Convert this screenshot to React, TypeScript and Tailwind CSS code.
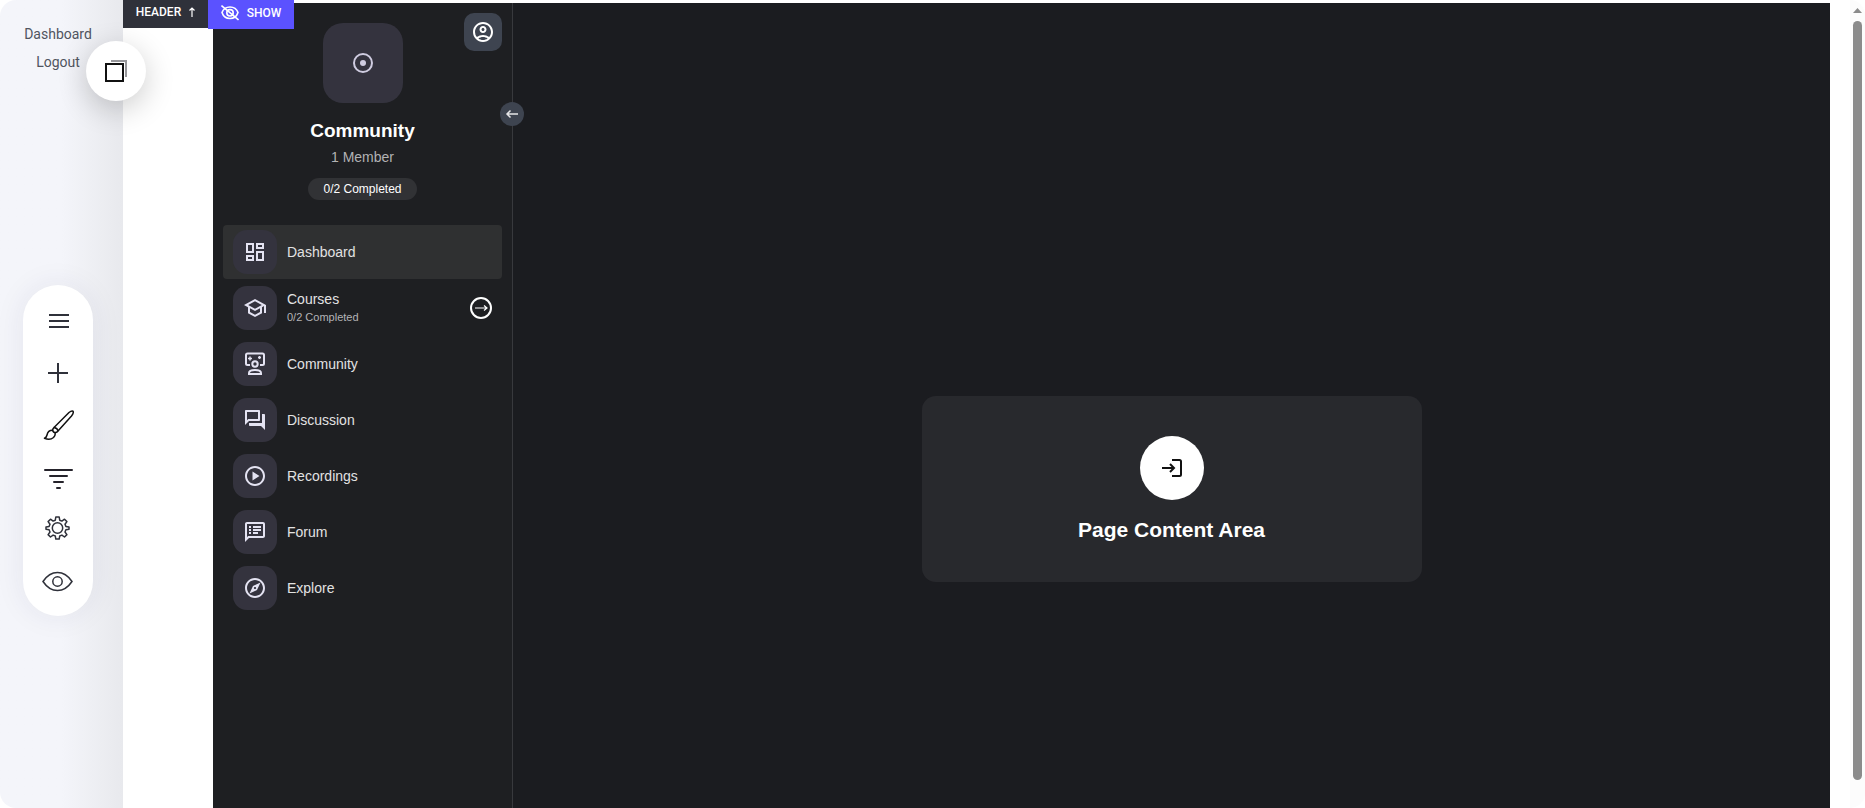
import { ReactNode } from "react";
import {
  MdOutlineAccountCircle,
  MdOutlineDashboard,
  MdOutlineExplore,
  MdOutlineForum,
  MdOutlinePlayCircle,
  MdOutlineSchool,
  MdOutlineSpeakerNotes,
} from "react-icons/md";

type NavItem = {
  label: string;
  icon: ReactNode;
  note?: string;
  active?: boolean;
};

function CommunityIcon() {
  return (
    <svg width="24" height="24" viewBox="0 0 24 24" fill="none" stroke="currentColor" strokeWidth="2" aria-hidden="true">
      <path d="M7 13H4.500Q3 13 3 11.500V3Q3 1.500 4.500 1.500H19.500Q21 1.500 21 3V11.500Q21 13 19.500 13H17" />
      <circle cx="12" cy="12" r="2.700" />
      <path d="M6 22V21Q6 18 12 18T18 21V22Z" />
      <path d="M7 4.500v4M5 6.500h4M16.500 4v3M15 5.500h3" strokeWidth="1.500" />
    </svg>
  );
}

const navItems: NavItem[] = [
  { label: "Dashboard", icon: <MdOutlineDashboard size={24} />, active: true },
  { label: "Courses", icon: <MdOutlineSchool size={24} />, note: "0/2 Completed" },
  { label: "Community", icon: <CommunityIcon /> },
  { label: "Discussion", icon: <MdOutlineForum size={24} /> },
  { label: "Recordings", icon: <MdOutlinePlayCircle size={24} /> },
  { label: "Forum", icon: <MdOutlineSpeakerNotes size={24} /> },
  { label: "Explore", icon: <MdOutlineExplore size={24} /> },
];

const tools: { label: string; icon: ReactNode }[] = [
  {
    label: "Menu",
    icon: (
      <svg width="32" height="32" viewBox="0 0 32 32" stroke="#2f313a" strokeWidth="2" aria-hidden="true">
        <path d="M7 10h20M7 16h20M7 22h20" />
      </svg>
    ),
  },
  {
    label: "Add",
    icon: (
      <svg width="32" height="32" viewBox="0 0 32 32" stroke="#2f313a" strokeWidth="2" aria-hidden="true">
        <path d="M6 16h20M16 6v20" />
      </svg>
    ),
  },
  {
    label: "Styles",
    icon: (
      <svg width="32" height="32" viewBox="0 0 32 32" fill="none" stroke="#111" strokeWidth="1.500" strokeLinejoin="round" aria-hidden="true">
        <path d="M12 18.500 27 3.500Q29.500 1.500 31 2.200Q32 4 29.500 7L16 22" />
        <path d="M12 18.500Q9.500 21 11.500 23Q14 24.500 16 22Q15.500 19 12 18.500Z" />
        <path d="M10.800 21.200Q6 21 5 26Q4.500 28.500 2.500 29.300Q8 31.500 11.500 28.500Q13.800 26 13 23.800" />
      </svg>
    ),
  },
  {
    label: "Filter",
    icon: (
      <svg width="32" height="32" viewBox="0 0 32 32" stroke="#25232b" strokeWidth="2" strokeLinecap="round" aria-hidden="true">
        <path d="M3 9h27M8 15h17M12 21h9M15 27h3" />
      </svg>
    ),
  },
  {
    label: "Settings",
    icon: (
      <svg width="32" height="32" viewBox="0 0 32 32" fill="none" stroke="#2f313a" strokeWidth="1.500" strokeLinejoin="round" aria-hidden="true">
        <circle cx="15.500" cy="15" r="5.200" />
        <path d="M13.800 4h3.400l.5 3.200 2.200.9 2.600-1.900 2.400 2.400-1.900 2.600.9 2.200 3.100.5v2.400l-3.100.5-.9 2.200 1.900 2.600-2.400 2.400-2.600-1.900-2.200.9-.5 3.100h-3.400l-.5-3.100-2.200-.9-2.600 1.900-2.400-2.400 1.900-2.600-.9-2.200-3.100-.5v-2.400l3.100-.5.9-2.200-1.900-2.600 2.400-2.400 2.600 1.900 2.200-.9z" />
      </svg>
    ),
  },
  {
    label: "Preview",
    icon: (
      <svg width="32" height="32" viewBox="0 0 32 32" fill="none" stroke="#2f313a" strokeWidth="1.500" aria-hidden="true">
        <path d="M1 16.500Q7 7.500 15.500 7.500T30 16.500Q24 25.500 15.500 25.500T1 16.500Z" />
        <circle cx="15.500" cy="16.500" r="4.700" />
      </svg>
    ),
  },
];

function EditorRail() {
  return (
    <aside className="relative z-10 flex w-[123px] shrink-0 flex-col rounded-l-2xl bg-linear-to-r from-[#f4f5fa] from-50% to-[#e8e9ed] pt-5">
      <nav className="flex w-[116px] flex-col items-center font-[Roboto,sans-serif] text-sm leading-7 text-[#50545f]">
        <a href="#dashboard">Dashboard</a>
        <a href="#logout">Logout</a>
      </nav>
      <button
        aria-label="Duplicate"
        className="absolute top-[41px] left-[86px] flex size-[60px] items-center justify-center rounded-full bg-white shadow-[0_8px_30px_rgba(0,0,0,0.2)]"
      >
        <svg width="24" height="24" viewBox="0 0 24 24" fill="none" strokeWidth="2" aria-hidden="true">
          <path d="M7 2h15v16" stroke="#97979b" />
          <path d="M2 5h17v17H2z" stroke="#111" />
        </svg>
      </button>
      <div className="mt-[209px] ml-[23px] flex w-[70px] flex-col items-center gap-5 rounded-full bg-white pt-5 pb-[19px] shadow-[0_0_30px_rgba(40,40,90,0.08)]">
        {tools.map((tool) => (
          <button key={tool.label} aria-label={tool.label} className="size-8">
            {tool.icon}
          </button>
        ))}
      </div>
    </aside>
  );
}

function SectionTabs() {
  return (
    <div className="absolute top-0 left-0 z-10 flex items-start font-[Roboto,sans-serif] text-xs font-medium text-white">
      <button className="flex h-7 w-[85px] items-center justify-center gap-2 bg-[#2f313a] pb-1">
        HEADER
        <svg width="6" height="10" viewBox="0 0 6 10" fill="none" stroke="currentColor" aria-hidden="true">
          <path d="M3 10V1M.5 3.500 3 1l2.500 2.500" strokeWidth="1.200" />
        </svg>
      </button>
      <button className="flex h-[29px] w-[86px] items-center justify-center gap-2 bg-[#5b52ff] pb-1">
        <svg width="18" height="18" viewBox="0 0 18 18" fill="none" stroke="currentColor" strokeWidth="1.600" aria-hidden="true">
          <path d="M1 8.500Q3 3 9 3T17 8.500Q15 14.500 9 14.500T1 8.500Z" />
          <circle cx="9" cy="8.800" r="3.200" />
          <path d="M.5 1.500 17.500 16" />
        </svg>
        SHOW
      </button>
    </div>
  );
}

function NavRow({ item }: { item: NavItem }) {
  return (
    <li className={`flex h-[54px] items-center rounded px-2.5 ${item.active ? "bg-[#2f3031]" : ""}`}>
      <a href={`#${item.label.toLowerCase()}`} className="flex flex-1 items-center gap-2.5">
        <span className="flex size-11 items-center justify-center rounded-[14px] bg-[#34333e] text-[#e4e3f2]">
          {item.icon}
        </span>
        <span className="flex flex-col pb-px text-sm leading-[18px] text-[#e2e2e2]">
          {item.label}
          {item.note && <span className="text-[11px] text-[#b4b4b6]">{item.note}</span>}
        </span>
      </a>
      {item.note && (
        <button aria-label={`Open ${item.label}`} className="text-white">
          <svg width="22" height="22" viewBox="0 0 22 22" fill="none" stroke="currentColor" aria-hidden="true">
            <circle cx="11" cy="11" r="10" strokeWidth="2" />
            <path d="M5 11h12M14 8.500 17 11l-3 2.500" strokeWidth="1.200" />
          </svg>
        </button>
      )}
    </li>
  );
}

function CommunitySidebar() {
  return (
    <aside className="relative w-[300px] shrink-0 border-r border-[#38393d] bg-[#1e1f22] px-2.5 pt-5">
      <button
        aria-label="Account"
        className="absolute top-2.5 right-2.5 flex size-[38px] items-center justify-center rounded-[10px] bg-[#3e4450] text-white"
      >
        <MdOutlineAccountCircle size={24} />
      </button>
      <button
        aria-label="Collapse sidebar"
        className="absolute top-[99px] -right-3 flex size-6 items-center justify-center rounded-full bg-[#3e4450] text-[#e6e6e8]"
      >
        <svg width="14" height="14" viewBox="0 0 14 14" fill="none" stroke="currentColor" strokeWidth="1.500" aria-hidden="true">
          <path d="M13 7H2M5.500 3.500 2 7l3.500 3.500" />
        </svg>
      </button>

      <header className="flex flex-col items-center">
        <div className="flex size-20 items-center justify-center rounded-[20px] bg-[#34333e] text-[#cfcce0]">
          <svg width="24" height="24" viewBox="0 0 24 24" fill="none" aria-hidden="true">
            <circle cx="12" cy="12" r="9" stroke="currentColor" strokeWidth="2" />
            <circle cx="12" cy="12" r="3" fill="currentColor" />
          </svg>
        </div>
        <h1 className="mt-4 text-[19px] leading-6 font-bold text-white">Community</h1>
        <p className="mt-1 text-sm leading-5 text-[#b2b2b4]">1 Member</p>
        <p className="mt-[11px] rounded-full bg-[#313235] px-[15px] text-xs leading-[22px] text-white">0/2 Completed</p>
      </header>

      <ul className="mt-[25px] flex flex-col gap-0.5">
        {navItems.map((item) => (
          <NavRow key={item.label} item={item} />
        ))}
      </ul>
    </aside>
  );
}

function ContentArea() {
  return (
    <main className="flex flex-1 items-center justify-center bg-[#1b1c20]">
      <section className="flex w-[500px] flex-col items-center rounded-[14px] bg-[#28292d] p-10">
        <div className="flex size-16 items-center justify-center rounded-full bg-white text-[#111]">
          <svg width="24" height="24" viewBox="0 0 24 24" fill="none" stroke="currentColor" strokeWidth="2" aria-hidden="true">
            <path d="M12 4h7.500Q21 4 21 5.500v13Q21 20 19.500 20H12" />
            <path d="M2 12h12M10 8l4 4-4 4" />
          </svg>
        </div>
        <h2 className="mt-[18px] text-[21px] leading-6 font-bold text-white">Page Content Area</h2>
      </section>
    </main>
  );
}

export default function App() {
  return (
    <div className="flex h-screen overflow-hidden bg-white font-['Liberation_Sans',Arial,sans-serif]">
      <EditorRail />
      <div className="relative min-w-0 flex-1 overflow-hidden pt-[3px] pr-5 pl-[90px]">
        <SectionTabs />
        {/* the page is taller than the window, the card sits in its middle */}
        <div className="flex h-[972px]">
          <CommunitySidebar />
          <ContentArea />
        </div>
      </div>
      <div className="flex w-[15px] shrink-0 flex-col items-center rounded-r-2xl bg-[#fcfcfc] pt-2 pb-7" aria-hidden="true">
        <svg width="9" height="5" viewBox="0 0 9 5" fill="#8b8b8b">
          <path d="M0 5 4.500 0 9 5z" />
        </svg>
        <div className="mt-2 w-[9px] flex-1 rounded-full bg-[#8b8b8b]" />
      </div>
    </div>
  );
}
